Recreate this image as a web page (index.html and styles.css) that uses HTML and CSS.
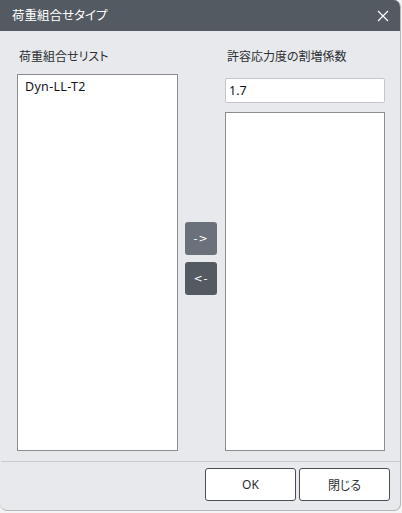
FILE: index.html
```html
<!DOCTYPE html>
<html lang="ja">
<head>
<meta charset="utf-8">
<link rel="stylesheet" href="styles.css">
</head>
<body>
<div class="dialog">
  <div class="titlebar">
    <span class="title">荷重組合せタイプ</span>
    <svg class="close" width="12" height="12" viewBox="0 0 12 12"><path d="M1 1 L11 11 M11 1 L1 11" stroke="#ffffff" stroke-width="1.2" fill="none"/></svg>
  </div>
  <div class="content">
    <div class="col left">
      <div class="label">荷重組合せリスト</div>
      <div class="list">
        <div class="item">Dyn-LL-T2</div>
      </div>
    </div>
    <div class="mid">
      <div class="move light">-&gt;</div>
      <div class="move dark">&lt;-</div>
    </div>
    <div class="col right">
      <div class="label">許容応力度の割増係数</div>
      <div class="input">1.7</div>
      <div class="list list-right"></div>
    </div>
  </div>
  <div class="footer">
    <div class="btn">OK</div>
    <div class="btn">閉じる</div>
  </div>
</div>
</body>
</html>
```
FILE: styles.css
```css
html, body {
  margin: 0;
  padding: 0;
}
body {
  background: #f4f4f5;
  width: 402px;
  height: 513px;
  overflow: hidden;
  font-family: "Noto Sans", "Noto Sans CJK JP", sans-serif;
  font-feature-settings: "palt";
}
.dialog {
  width: 400px;
  height: 510px;
  background: #e8e9ec;
  border-right: 1px solid #b4b6ba;
  border-bottom: 1px solid #b4b6ba;
  border-radius: 0 7px 7px 7px;
  display: flex;
  flex-direction: column;
  overflow: hidden;
}
.titlebar {
  height: 31px;
  flex: none;
  background: #545a61;
  display: flex;
  align-items: center;
  justify-content: space-between;
  padding: 0 11px 0 12px;
  color: #ffffff;
}
.title {
  font-size: 12.5px;
  line-height: 16px;
}
.close {
  display: block;
}
.content {
  flex: 1;
  display: flex;
  padding: 17px 15px 10px 17px;
}
.col {
  display: flex;
  flex-direction: column;
}
.left {
  width: 161px;
}
.right {
  width: 160px;
}
.label {
  font-size: 12px;
  line-height: 18px;
  color: #2c2f33;
  padding-left: 2px;
}
.list {
  flex: 1;
  margin-top: 8px;
  background: #ffffff;
  border: 1px solid #8a8d92;
  padding: 3px 7px;
}
.list-right {
  margin-top: 9px;
}
.item {
  font-size: 12.5px;
  line-height: 18px;
  color: #14141a;
  letter-spacing: 0.3px;
}
.input {
  margin-top: 12px;
  height: 25px;
  box-sizing: border-box;
  background: #ffffff;
  border: 1px solid #c3c6ca;
  border-radius: 2px;
  font-size: 12.5px;
  line-height: 23px;
  padding-left: 3px;
  color: #14141a;
}
.mid {
  width: 32px;
  margin: 0 8px 0 7px;
  padding-top: 174px;
  display: flex;
  flex-direction: column;
  gap: 7px;
}
.move {
  height: 33px;
  border-radius: 3px;
  color: #ffffff;
  font-size: 11px;
  letter-spacing: 1px;
  display: flex;
  align-items: center;
  justify-content: center;
  font-family: "DejaVu Sans", sans-serif;
}
.move.light {
  background: #6b717a;
}
.move.dark {
  background: #545a61;
}
.footer {
  flex: none;
  border-top: 1px solid #c8cacd;
  margin-left: 1px;
  display: flex;
  justify-content: flex-end;
  gap: 3px;
  padding: 6px 10px 9px 0;
}
.btn {
  width: 89px;
  height: 31px;
  background: #ffffff;
  border: 1px solid #4a4f56;
  border-radius: 3px;
  display: flex;
  align-items: center;
  justify-content: center;
  font-size: 12px;
  color: #2c2f33;
}
```
